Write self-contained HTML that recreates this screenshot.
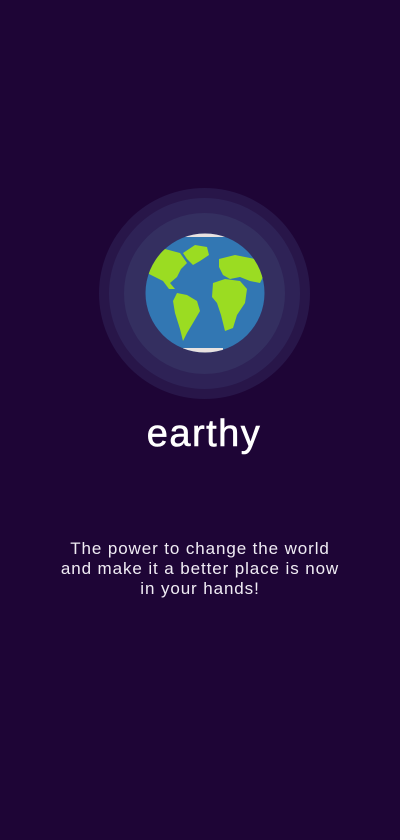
<!DOCTYPE html>
<html><head><style>
html,body{margin:0;padding:0;}
body{width:400px;height:840px;background:#1e0536;position:relative;overflow:hidden;font-family:"Liberation Sans",sans-serif;color:#fff;}
.c{position:absolute;border-radius:50%;}
h1{position:absolute;top:409px;left:4px;width:400px;text-align:center;margin:0;font-weight:normal;font-size:38px;line-height:50px;letter-spacing:1.5px;-webkit-text-stroke:0.6px #fff;}
p{position:absolute;top:539px;left:0;width:400px;text-align:center;margin:0;font-size:17px;line-height:20px;letter-spacing:0.9px;color:#f0ecf4;}
</style></head><body>
<div class="c" style="left:99px;top:188px;width:211px;height:211px;background:#281649"></div>
<div class="c" style="left:109px;top:198px;width:191px;height:191px;background:#2e2256"></div>
<div class="c" style="left:124px;top:213px;width:161px;height:161px;background:#342f60"></div>
<svg style="position:absolute;left:145px;top:233px" width="120" height="120" viewBox="0 0 120 120">
<defs><clipPath id="g"><circle cx="60" cy="60" r="59.5"/></clipPath></defs>
<circle cx="60" cy="60" r="59.5" fill="#3277b3"/>
<g clip-path="url(#g)" fill="#9bdc22">
<rect x="35" y="-2" width="45" height="6" fill="#e8e2e0"/>
<rect x="38" y="115" width="40" height="6" fill="#e8e2e0"/>
<path d="M5 22 L20 16 L35 20 L42 30 L36 36 L32 44 L25 50 L30 56 L24 56 L18 48 L10 44 L2 40 Z"/>
<path d="M38 20 L50 12 L62 14 L64 22 L55 28 L48 32 L42 26 Z"/>
<path d="M32 60 L42 62 L52 68 L55 78 L48 90 L42 100 L38 108 L35 96 L30 80 L28 68 Z"/>
<path d="M74 26 L90 22 L110 26 L120 40 L115 50 L105 48 L95 44 L85 46 L78 42 L74 34 Z"/>
<path d="M68 50 L80 46 L95 48 L102 56 L100 70 L92 82 L88 95 L80 98 L76 82 L72 70 L67 64 Z"/>
</g>
</svg>
<h1>earthy</h1>
<p>The power to change the world<br>and make it a better place is now<br>in your hands!</p>
</body></html>
